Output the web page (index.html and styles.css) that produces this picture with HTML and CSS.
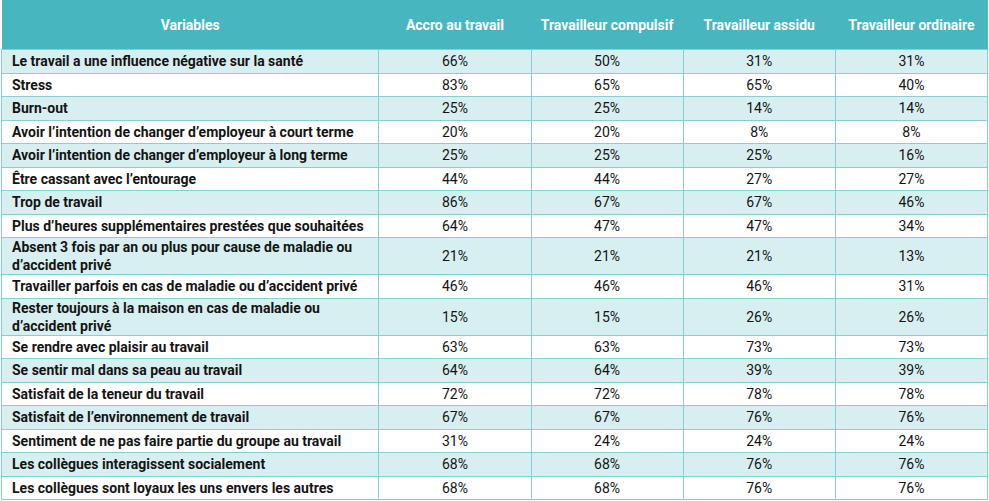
FILE: index.html
```html
<!DOCTYPE html>
<html lang="fr">
<head>
<meta charset="utf-8">
<link rel="stylesheet" href="styles.css">
</head>
<body>
<div class="wrap">
<table class="data">
<colgroup>
<col class="c-var"><col class="c-num"><col class="c-num"><col class="c-num"><col class="c-num">
</colgroup>
<thead>
<tr><th>Variables</th><th>Accro au travail</th><th>Travailleur compulsif</th><th>Travailleur assidu</th><th>Travailleur ordinaire</th></tr>
</thead>
<tbody>
<tr><td>Le travail a une influence négative sur la santé</td><td>66%</td><td>50%</td><td>31%</td><td>31%</td></tr>
<tr><td>Stress</td><td>83%</td><td>65%</td><td>65%</td><td>40%</td></tr>
<tr><td>Burn-out</td><td>25%</td><td>25%</td><td>14%</td><td>14%</td></tr>
<tr><td>Avoir l’intention de changer d’employeur à court terme</td><td>20%</td><td>20%</td><td>8%</td><td>8%</td></tr>
<tr><td>Avoir l’intention de changer d’employeur à long terme</td><td>25%</td><td>25%</td><td>25%</td><td>16%</td></tr>
<tr><td>Être cassant avec l’entourage</td><td>44%</td><td>44%</td><td>27%</td><td>27%</td></tr>
<tr><td>Trop de travail</td><td>86%</td><td>67%</td><td>67%</td><td>46%</td></tr>
<tr><td>Plus d’heures supplémentaires prestées que souhaitées</td><td>64%</td><td>47%</td><td>47%</td><td>34%</td></tr>
<tr class="two"><td>Absent 3 fois par an ou plus pour cause de maladie ou<br>d’accident privé</td><td>21%</td><td>21%</td><td>21%</td><td>13%</td></tr>
<tr><td>Travailler parfois en cas de maladie ou d’accident privé</td><td>46%</td><td>46%</td><td>46%</td><td>31%</td></tr>
<tr class="two"><td>Rester toujours à la maison en cas de maladie ou<br>d’accident privé</td><td>15%</td><td>15%</td><td>26%</td><td>26%</td></tr>
<tr><td>Se rendre avec plaisir au travail</td><td>63%</td><td>63%</td><td>73%</td><td>73%</td></tr>
<tr><td>Se sentir mal dans sa peau au travail</td><td>64%</td><td>64%</td><td>39%</td><td>39%</td></tr>
<tr><td>Satisfait de la teneur du travail</td><td>72%</td><td>72%</td><td>78%</td><td>78%</td></tr>
<tr><td>Satisfait de l’environnement de travail</td><td>67%</td><td>67%</td><td>76%</td><td>76%</td></tr>
<tr><td>Sentiment de ne pas faire partie du groupe au travail</td><td>31%</td><td>24%</td><td>24%</td><td>24%</td></tr>
<tr><td>Les collègues interagissent socialement</td><td>68%</td><td>68%</td><td>76%</td><td>76%</td></tr>
<tr><td>Les collègues sont loyaux les uns envers les autres</td><td>68%</td><td>68%</td><td>76%</td><td>76%</td></tr>
</tbody>
</table>
</div>
</body>
</html>
```
FILE: styles.css
```css
html, body {
  margin: 0;
  padding: 0;
  background: #ffffff;
}
.wrap {
  padding: 0 1px 0 1px;
}
.data {
  border-collapse: collapse;
  table-layout: fixed;
  width: 987px;
  font-family: Roboto, "Liberation Sans", sans-serif;
  font-size: 14px;
  color: #141414;
}
.c-var { width: 377px; }
.c-num { width: 152px; }
.data thead th {
  background: #47b6bf;
  color: #ffffff;
  font-weight: 700;
  height: 49px;
  padding: 0 4px;
  text-align: center;
  vertical-align: middle;
  border: none;
}
.data td {
  border: 1px solid #86d0d4;
  height: 22.5px;
  padding: 0 10px;
  line-height: 18px;
  text-align: center;
  vertical-align: middle;
}
.data td:first-child {
  text-align: left;
  font-weight: 700;
  padding-left: 10px;
  padding-right: 4px;
}
.data tr.two td {
  height: 36px;
}
.data tbody tr:nth-child(odd) td {
  background: #d8eff1;
}
.data tbody tr:nth-child(even) td {
  background: #ffffff;
}
```
